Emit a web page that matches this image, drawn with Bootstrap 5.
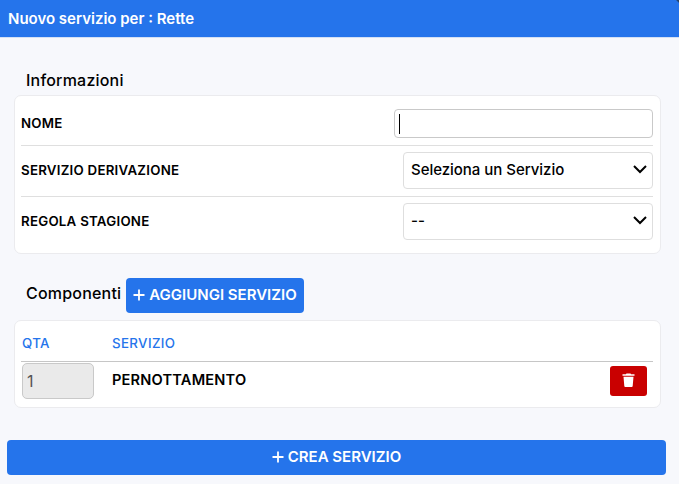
<!DOCTYPE html>
<html lang="it">
<head>
<meta charset="utf-8">
<meta name="viewport" content="width=device-width, initial-scale=1">
<title>Nuovo servizio</title>
<link href="https://cdn.jsdelivr.net/npm/bootstrap@5.3.0/dist/css/bootstrap.min.css" rel="stylesheet">
<style>
body{font-family:Inter,"Liberation Sans",sans-serif;font-weight:500;color:#000;background:#f7f8fc;line-height:20px;overflow:hidden}
.topbar{height:38px;background:linear-gradient(225deg,#25456f 1.5px,#2574eb 2.5px);border-bottom:1px solid #d3e0f5;font-size:15px;font-weight:600;padding:0 8px}
.page-body{padding:0 18px 0 14px}
.section-title{font-size:16px;letter-spacing:.2px;padding-left:12px}
.title-info{height:57px;padding-top:32px}
.title-comp{height:35px;margin:24px 0 7px;gap:5px}
.title-comp>span{padding-bottom:5px}
.panel{border:1px solid #ebebee;border-radius:7px;padding:0 7px 0 6px}
.panel-info{height:159px}
.panel-comp{height:88px}
.field{font-size:13.3px;border-bottom:1px solid #dfdfdf;height:51px;padding-bottom:1px}
.field label{font-weight:560;letter-spacing:.24px}
.field:first-child{height:50px;padding:5px 0 0}
.field:last-child{border-bottom:0;padding-bottom:2px}
.field:not(:first-child) label{padding-bottom:2px}
.name-input{width:259px;height:29px;border-color:#c9c9c9;border-radius:4px;background:linear-gradient(#000,#000) no-repeat 4px 4px/1px 20px #fff}
.pick{width:250px;height:37px;border-color:#dedede;border-radius:4px;font-size:15px;font-weight:550;letter-spacing:-.03px;color:#000;padding:0 30px 0 7px;background-position:right 4px top 8px;background-size:16px 16px;background-image:url("data:image/svg+xml,%3csvg xmlns='http://www.w3.org/2000/svg' viewBox='0 0 16 16'%3e%3cpath d='M2 5l6 6 6-6' fill='none' stroke='%23000' stroke-width='2'/%3e%3c/svg%3e")}
.action{background:#2574eb;color:#fff;font-size:15px;font-weight:600;line-height:20px;letter-spacing:0;height:35px;border:0;border-radius:4px;padding:0 7px 1px;gap:4px}
.list-head{font-size:13.3px;letter-spacing:.37px;color:#2574eb;height:41px;padding-top:4px;border-bottom:1px solid #c6c6c6}
.qty-col{width:91px;padding-left:1px}
.qty{width:72px;height:36px;border-color:#c9c9c9;border-radius:5px;background:#eaeaea!important;color:#545454;font-size:16px;font-weight:400;padding:0 4px}
.list-row{font-size:14.6px;padding:1px 6px 0 0}
.item-name{padding-top:7px;font-weight:560;letter-spacing:.18px}
.del{width:37px;height:30px;background:#c90000;border:0;border-radius:3px;margin-top:3px}
.create{margin:32px 13px 0 7px}
</style>
<script src="https://cdn.jsdelivr.net/npm/bootstrap@5.3.0/dist/js/bootstrap.bundle.min.js"></script>
</head>
<body>
<header class="topbar d-flex align-items-center text-white">Nuovo servizio per : Rette</header>
<main class="page-body">
  <div class="section-title title-info">Informazioni</div>
  <section class="panel panel-info bg-white">
    <div class="field d-flex align-items-center justify-content-between"><label for="nome">NOME</label><input id="nome" class="form-control name-input"></div>
    <div class="field d-flex align-items-center justify-content-between"><label for="der">SERVIZIO DERIVAZIONE</label><select id="der" class="form-select pick"><option>Seleziona un Servizio</option></select></div>
    <div class="field d-flex align-items-center justify-content-between"><label for="reg">REGOLA STAGIONE</label><select id="reg" class="form-select pick"><option>--</option></select></div>
  </section>
  <div class="section-title title-comp d-flex align-items-center"><span>Componenti</span>
    <button class="btn action d-flex align-items-center"><svg width="12" height="12" viewBox="0 0 12 12" stroke="#fff" stroke-width="1.8"><path d="M6 .5v11M.5 6h11"/></svg>AGGIUNGI SERVIZIO</button></div>
  <section class="panel panel-comp bg-white">
    <div class="list-head d-flex align-items-center"><div class="qty-col">QTA</div><div>SERVIZIO</div></div>
    <div class="list-row d-flex align-items-start"><div class="qty-col"><input class="form-control qty" value="1" disabled></div>
      <div class="item-name flex-grow-1">PERNOTTAMENTO</div>
      <button class="btn del d-flex align-items-center justify-content-center p-0" aria-label="Elimina"><svg width="13" height="16" viewBox="0 0 13 16" fill="#fff"><path d="M4.500 0.500h4l.6.800H12.500v1.400H.5V1.300h3.400zM1.500 3.700h10l-.8 9.300a1 1 0 0 1-1 .9H3.300a1 1 0 0 1-1-.9z"/></svg></button></div>
  </section>
</main>
<div class="create"><button class="btn action w-100 d-flex align-items-center justify-content-center"><svg width="12" height="12" viewBox="0 0 12 12" stroke="#fff" stroke-width="1.8"><path d="M6 .5v11M.5 6h11"/></svg>CREA SERVIZIO</button></div>
</body>
</html>
